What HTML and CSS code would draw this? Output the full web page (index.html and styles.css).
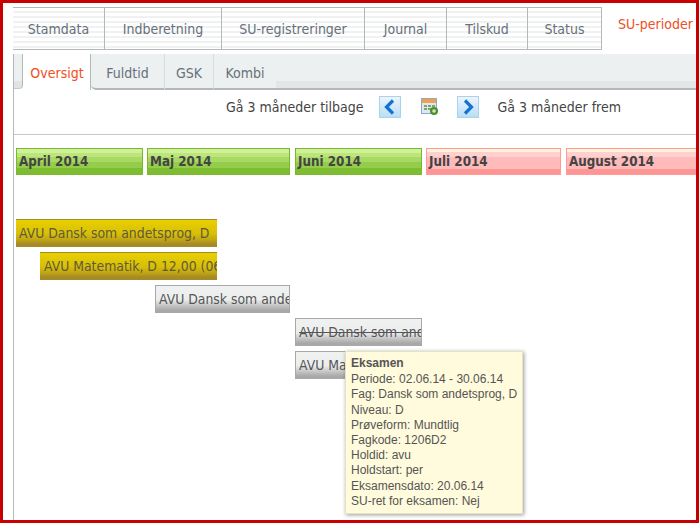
FILE: index.html
```html
<!DOCTYPE html>
<html lang="da">
<head>
<meta charset="utf-8">
<title>SU-perioder</title>
<link rel="stylesheet" href="styles.css">
</head>
<body>
<div class="frame">
  <nav class="main-tabs">
    <a class="main-tab w1">Stamdata</a>
    <a class="main-tab w2">Indberetning</a>
    <a class="main-tab w3">SU-registreringer</a>
    <a class="main-tab w4">Journal</a>
    <a class="main-tab w5">Tilskud</a>
    <a class="main-tab w6">Status</a>
    <a class="main-tab active">SU-perioder</a>
  </nav>
  <div class="content">
    <div class="sub-bar">
      <span class="sub-lead"></span>
      <a class="sub-tab active">Oversigt</a>
      <a class="sub-tab s2">Fuldtid</a>
      <a class="sub-tab s3">GSK</a>
      <a class="sub-tab s4">Kombi</a>
      <span class="sub-fill"></span>
    </div>
    <div class="pager">
      <span class="pager-label">Gå 3 måneder tilbage</span>
      <span class="arrow-btn">
        <svg width="20" height="20" viewBox="0 0 20 20"><path d="M13 3.500L6.500 10L13 16.500" fill="none" stroke="#1273d6" stroke-width="3.200"/></svg>
      </span>
      <svg class="cal" width="18" height="18" viewBox="0 0 18 18">
        <rect x="0.500" y="0.500" width="15" height="15" fill="#dfe8f2" stroke="#8fa9c6"/>
        <rect x="1" y="1" width="14" height="4" fill="#f0a050"/>
        <path d="M3 7h3v2H3zM7 7h3v2H7zM11 7h3v2h-3zM3 10h3v2H3zM7 10h3v2H7z" fill="#79a86a"/>
        <circle cx="13" cy="13" r="4" fill="#4f8f2f"/>
        <circle cx="13" cy="13" r="1.800" fill="#cfe8b8"/>
      </svg>
      <span class="arrow-btn">
        <svg width="20" height="20" viewBox="0 0 20 20"><path d="M7 3.500L13.500 10L7 16.500" fill="none" stroke="#1273d6" stroke-width="3.200"/></svg>
      </span>
      <span class="pager-label next">Gå 3 måneder frem</span>
    </div>
    <div class="timeline">
      <div class="months">
        <div class="month green m-apr">April 2014</div>
        <div class="month green m-maj">Maj 2014</div>
        <div class="month green m-jun">Juni 2014</div>
        <div class="month red m-jul">Juli 2014</div>
        <div class="month red m-aug">August 2014</div>
      </div>
      <div class="bars">
        <div class="bar gold b1">AVU Dansk som andetsprog, D</div>
        <div class="bar gold b2">AVU Matematik, D 12,00 (06.01.14 - 20.06.14)</div>
        <div class="bar grey b3">AVU Dansk som andetsprog, D</div>
        <div class="bar grey b4 struck">AVU Dansk som andetsprog, D</div>
        <div class="bar grey b4">AVU Matematik, D</div>
      </div>
    </div>
  </div>
  <div class="tooltip">
    <strong>Eksamen</strong>
    <div>Periode: 02.06.14 - 30.06.14</div>
    <div>Fag: Dansk som andetsprog, D</div>
    <div>Niveau: D</div>
    <div>Prøveform: Mundtlig</div>
    <div>Fagkode: 1206D2</div>
    <div>Holdid: avu</div>
    <div>Holdstart: per</div>
    <div>Eksamensdato: 20.06.14</div>
    <div>SU-ret for eksamen: Nej</div>
  </div>
</div>
</body>
</html>
```

FILE: styles.css
```css
* { box-sizing: border-box; }
html, body { margin: 0; padding: 0; }
body { width: 699px; height: 523px; overflow: hidden; background: #fff; font-family: "DejaVu Sans Condensed", "DejaVu Sans", sans-serif; font-stretch: condensed; }
.frame { position: relative; width: 699px; height: 523px; border: 3px solid #c80000; overflow: hidden; background: #fff; }

.main-tabs { display: flex; height: 51px; padding-left: 10px; }
.main-tab { height: 43px; margin-top: 4px; border-top: 1px solid #b4b8b8; border-bottom: 1px solid #b4b8b8; border-right: 1px solid #b4b8b8; display: flex; align-items: center; justify-content: center; font-size: 14px; color: #66707a; background: repeating-linear-gradient(to bottom, #fff 0, #fff 3px, #f0f2f2 3px, #f0f2f2 5px); }
.main-tab.w1 { width: 92px; }
.main-tab.w2 { width: 117px; }
.main-tab.w3 { width: 143px; }
.main-tab.w4 { width: 82px; }
.main-tab.w5 { width: 81px; }
.main-tab.w6 { width: 74px; }
.main-tab.active { flex: 1; margin-top: 0; height: 46px; padding: 0 0 4px 16px; justify-content: flex-start; border: 0; background: #fff; color: #f04e23; white-space: nowrap; }

.content { margin-left: 10px; height: 466px; border-left: 1px solid #b4b8b8; }
.sub-bar { display: flex; height: 36px; }
.sub-lead { width: 9px; height: 35px; background: linear-gradient(to bottom, #ecf0f1 0, #ecf0f1 27px, #e0e4e4 27px); border-right: 1px solid #b4b8b8; border-bottom: 1px solid #c6caca; border-bottom-right-radius: 4px; }
.sub-fill { flex: 1; height: 36px; background: linear-gradient(to bottom, #ecf0f1 0, #ecf0f1 27px, #e2e6e6 27px, #e2e6e6 34px, #b4b8b8 34px); }
.sub-tab { height: 36px; display: flex; align-items: center; font-size: 14px; color: #66707a; justify-content: center; border-right: 1px solid #d6dcdc; border-bottom: 2px solid #b4b8b8; background: #ecf0f1; padding-top: 4px; }
.sub-tab.active { width: 68px; background: #fff; color: #f04e23; border-right: 1px solid #b4b8b8; border-bottom: 0; padding: 2px 0 0 1px; }
.sub-tab.s2 { width: 74px; border-bottom-left-radius: 5px; }
.sub-tab.s3 { width: 49px; }
.sub-tab.s4 { width: 62px; border-right: 0; }

.pager { display: flex; align-items: center; height: 45px; border-bottom: 1px solid #c8c8c8; padding-left: 212px; padding-bottom: 10px; font-size: 14px; color: #444; }
.pager-label { white-space: nowrap; }
.arrow-btn { width: 22px; height: 22px; margin-left: 15px; background: linear-gradient(to bottom, #eef4fa, #b9def5); border: 1px solid #a9d3ec; display: flex; align-items: center; justify-content: center; }
.arrow-btn svg { flex: none; }
.cal { margin-left: 20px; }
.cal + .arrow-btn { margin-left: 18px; }
.pager-label.next { margin-left: 19px; }

.timeline { padding: 13px 0 0 2px; }
.months { display: flex; width: 700px; }
.month { height: 27px; font-size: 13.300px; font-weight: bold; color: #444; padding: 0 2px 1px; display: flex; align-items: center; white-space: nowrap; }
.month.green { border: 1px solid #7ab92f; background: linear-gradient(to bottom, #d0f09a 0, #d0f09a 4px, #bce67c 4px, #bce67c 8px, #a8d964 8px, #a8d964 13px, #94cc4c 13px, #94cc4c 19px, #7ebc32 19px); }
.month.red { border: 1px solid #ff9a9a; background: linear-gradient(to bottom, #fff3d8 0, #fff3d8 3px, #ffd0d0 3px, #ffd0d0 8px, #ffbaba 8px, #ffbaba 20px, #ff9494 20px); }
.m-apr { width: 127px; margin-right: 4px; }
.m-maj { width: 143px; margin-right: 5px; }
.m-jun { width: 127px; margin-right: 4px; }
.m-jul { width: 135px; margin-right: 5px; }
.m-aug { width: 140px; }

.bars { display: flex; flex-direction: column; gap: 5px; margin-top: 44px; }
.bar { height: 28px; font-size: 13.850px; color: #555; white-space: nowrap; overflow: hidden; display: flex; align-items: center; padding: 0 0 2px 3px; border-top: 1px solid; }
.bar.gold { color: #5f5a3a; border-color: #a68a28; background: linear-gradient(to bottom, #e8d000 0, #d8bf08 50%, #c2a612 72%, #a68a28 90%); }
.bar.grey { border: 1px solid #a8a8a8; border-bottom: 0; background: linear-gradient(to bottom, #f0f2f2 0, #eceeee 50%, #c6c6c6 72%, #a8a8a8 90%); }
.bar.struck { text-decoration: line-through; }
.b1 { width: 201px; }
.b2 { width: 177px; margin-left: 24px; padding-left: 4px; }
.b3 { width: 135px; margin-left: 139px; }
.b4 { width: 127px; margin-left: 279px; }

.tooltip { position: absolute; left: 342px; top: 348px; width: 178px; height: 163px; padding: 4px 5px; background: #fffbdc; border: 1px solid #e6e2c2; box-shadow: 1px 1px 4px rgba(0,0,0,.4); font-family: "Liberation Sans", sans-serif; font-stretch: normal; font-size: 12px; line-height: 15.200px; color: #555; white-space: nowrap; }
.tooltip strong { display: block; margin-bottom: 1px; }
```
